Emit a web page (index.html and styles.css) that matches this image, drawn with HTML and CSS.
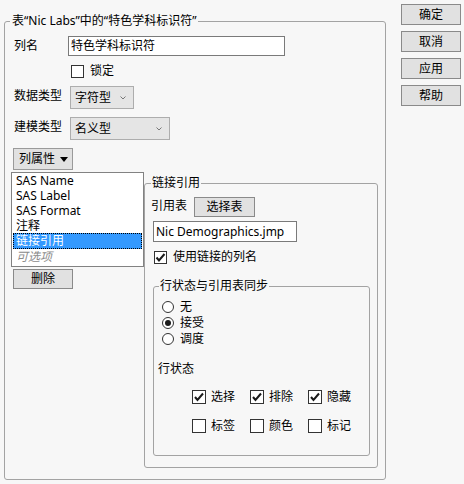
FILE: index.html
```html
<!DOCTYPE html>
<html lang="zh-CN">
<head>
<meta charset="utf-8">
<title>列信息</title>
<link rel="stylesheet" href="styles.css">
</head>
<body>
<div class="dialog">
  <fieldset class="outer">
    <legend class="outer-title">表“Nic Labs”中的“特色学科标识符”</legend>
    <div class="row r-name"><span class="lbl">列名</span><div class="textbox name-box">特色学科标识符</div></div>
    <div class="row r-lock"><span class="cb"></span><span class="cb-label">锁定</span></div>
    <div class="row r-type"><span class="lbl lbl-top">数据类型</span>
      <div class="combo combo-short"><span class="ctext">字符型</span><svg class="chev" width="6" height="4" viewBox="0 0 6 4"><polyline points="0.5,0.5 3,3 5.5,0.5" fill="none" stroke="#777" stroke-width="1"/></svg></div>
    </div>
    <div class="row r-model"><span class="lbl lbl-top">建模类型</span>
      <div class="combo combo-long"><span class="ctext">名义型</span><svg class="chev" width="6" height="4" viewBox="0 0 6 4"><polyline points="0.5,0.5 3,3 5.5,0.5" fill="none" stroke="#777" stroke-width="1"/></svg></div>
    </div>
    <div class="menubtn"><span class="ctext">列属性</span><svg width="8" height="5" viewBox="0 0 8 5"><polygon points="0,0 8,0 4,5" fill="#000"/></svg></div>
    <div class="split">
      <div class="leftcol">
        <ul class="list">
          <li>SAS Name</li>
          <li>SAS Label</li>
          <li>SAS Format</li>
          <li>注释</li>
          <li class="sel">链接引用</li>
          <li class="opt">可选项</li>
        </ul>
        <div class="btn del">删除</div>
      </div>
      <fieldset class="link">
        <legend class="link-title">链接引用</legend>
        <div class="ref-row"><span class="ref-lbl">引用表</span><div class="btn pick">选择表</div></div>
        <div class="textbox file-box">Nic Demographics.jmp</div>
        <div class="use-row"><span class="cb checked"><svg width="13" height="13" viewBox="0 0 13 13"><path d="M2.5 6.5 L5 9.5 L10.5 3" fill="none" stroke="#1a1a1a" stroke-width="2"/></svg></span><span class="cb-label">使用链接的列名</span></div>
        <fieldset class="sync">
          <legend class="sync-title">行状态与引用表同步</legend>
          <div class="radios">
            <div class="radio-row"><span class="radio"></span><span class="rtext">无</span></div>
            <div class="radio-row"><span class="radio on"></span><span class="rtext">接受</span></div>
            <div class="radio-row"><span class="radio"></span><span class="rtext">调度</span></div>
          </div>
          <div class="rs-label">行状态</div>
          <div class="checks">
            <div class="ck"><span class="cb big checked"><svg width="14" height="14" viewBox="0 0 14 14"><path d="M3 7 L5.5 10 L11 3.5" fill="none" stroke="#1a1a1a" stroke-width="2"/></svg></span><span class="rtext">选择</span></div>
            <div class="ck"><span class="cb big checked"><svg width="14" height="14" viewBox="0 0 14 14"><path d="M3 7 L5.5 10 L11 3.5" fill="none" stroke="#1a1a1a" stroke-width="2"/></svg></span><span class="rtext">排除</span></div>
            <div class="ck"><span class="cb big checked"><svg width="14" height="14" viewBox="0 0 14 14"><path d="M3 7 L5.5 10 L11 3.5" fill="none" stroke="#1a1a1a" stroke-width="2"/></svg></span><span class="rtext">隐藏</span></div>
            <div class="ck"><span class="cb big"></span><span class="rtext">标签</span></div>
            <div class="ck"><span class="cb big"></span><span class="rtext">颜色</span></div>
            <div class="ck"><span class="cb big"></span><span class="rtext">标记</span></div>
          </div>
        </fieldset>
      </fieldset>
    </div>
  </fieldset>
  <div class="actions">
    <div class="btn act">确定</div>
    <div class="btn act">取消</div>
    <div class="btn act">应用</div>
    <div class="btn act">帮助</div>
  </div>
</div>
</body>
</html>
```

FILE: styles.css
```css
html, body {
  margin: 0;
  padding: 0;
}
body {
  width: 464px;
  height: 484px;
  overflow: hidden;
  background: #f7f7f7;
  color: #000;
  font-family: "Noto Sans", "Noto Sans CJK SC", sans-serif;
  font-size: 12px;
  line-height: 16px;
}
.dialog {
  display: flex;
  align-items: flex-start;
}
fieldset {
  margin: 0;
  border: 1px solid #a3a3a3;
  border-radius: 3px;
  box-sizing: border-box;
  min-width: 0;
}
legend {
  line-height: 16px;
  height: 16px;
  white-space: nowrap;
}
.outer {
  width: 382px;
  height: 467px;
  margin: 13px 0 0 4px;
  padding: 0;
}
.outer-title {
  margin-left: 5px;
  padding: 0 2px;
}
.row {
  display: flex;
  align-items: center;
  margin-left: 9px;
}
.lbl {
  width: 54px;
  height: 16px;
  flex: none;
}
.lbl-top {
  align-self: flex-start;
  margin-top: 2px;
}
.ctext, .rtext, .cb-label, .ref-lbl {
  display: block;
  height: 16px;
  white-space: nowrap;
}
.textbox {
  box-sizing: border-box;
  background: #fff;
  border: 1px solid #7a7a7a;
  padding: 0 2px;
  line-height: 18px;
  white-space: nowrap;
  overflow: hidden;
}
.name-box {
  width: 217px;
  height: 20px;
}
.r-name {
  margin-top: 7px;
  height: 20px;
}
.r-lock {
  margin-top: 8px;
  padding-left: 57px;
  height: 14px;
}
.cb {
  display: inline-flex;
  width: 13px;
  height: 13px;
  box-sizing: border-box;
  border: 1px solid #333;
  background: #fff;
  flex: none;
  position: relative;
}
.cb svg {
  position: absolute;
  left: -1px;
  top: -1px;
}
.cb.big {
  width: 14px;
  height: 14px;
}
.cb-label {
  margin-left: 6px;
}
.r-type {
  margin-top: 8px;
  align-items: flex-start;
  height: 23px;
}
.r-model {
  margin-top: 8px;
  align-items: flex-start;
  height: 23px;
}
.combo {
  box-sizing: border-box;
  height: 23px;
  margin-left: 2px;
  border: 1px solid #adadad;
  background: #e5e5e5;
  display: flex;
  align-items: center;
  justify-content: space-between;
  padding: 0 7px 0 4px;
}
.combo-short {
  width: 64px;
}
.combo-long {
  width: 100px;
}
.menubtn {
  box-sizing: border-box;
  width: 60px;
  height: 22px;
  margin: 8px 0 0 8px;
  border: 1px solid #9a9a9a;
  background: #e1e1e1;
  display: flex;
  align-items: center;
  gap: 5px;
  padding-left: 5px;
}
.split {
  display: flex;
  align-items: flex-start;
  margin-top: 2px;
}
.leftcol {
  margin-left: 6px;
  width: 133px;
  flex: none;
}
.list {
  list-style: none;
  margin: 0;
  box-sizing: border-box;
  width: 133px;
  height: 95px;
  border: 1px solid #828282;
  background: #fff;
  padding: 0 1px;
}
.list li {
  line-height: 15px;
  height: 15px;
  padding-left: 3px;
  white-space: nowrap;
}
.list li.sel {
  line-height: 16px;
  height: 16px;
  background: #3399ff;
  color: #fff;
  outline: 1px dotted #000;
  outline-offset: -1px;
}
.list li.opt {
  color: #8c8c8c;
  font-style: italic;
}
.btn {
  box-sizing: border-box;
  background: #e1e1e1;
  border: 1px solid #8a8a8a;
  display: flex;
  align-items: center;
  justify-content: center;
  line-height: 16px;
}
.del {
  width: 60px;
  height: 20px;
  margin: 2px 0 0 2px;
}
.link {
  width: 234px;
  margin-top: 3px;
  padding: 0 0 11px 0;
}
.link-title {
  margin-left: 6px;
  padding: 0 1px;
}
.ref-row {
  display: flex;
  align-items: flex-start;
  margin: 6px 0 0 6px;
  height: 20px;
}
.ref-lbl {
  margin-top: 1px;
}
.pick {
  width: 61px;
  height: 20px;
  margin-left: 7px;
}
.file-box {
  width: 144px;
  height: 21px;
  margin: 4px 0 0 8px;
  line-height: 19px;
}
.use-row {
  display: flex;
  align-items: center;
  margin: 8px 0 0 9px;
  height: 14px;
}
.sync {
  width: 217px;
  margin: 14px 0 0 8px;
  padding: 0 0 21px 0;
}
.sync-title {
  margin-left: 5px;
  padding: 0 1px;
}
.radios {
  margin: 5px 0 0 8px;
}
.radio-row {
  display: flex;
  align-items: center;
  height: 16px;
}
.radio {
  width: 12px;
  height: 12px;
  box-sizing: border-box;
  border: 1px solid #333;
  border-radius: 50%;
  background: #fff;
  margin-right: 6px;
  display: flex;
  align-items: center;
  justify-content: center;
}
.radio.on::after {
  content: "";
  width: 6px;
  height: 6px;
  border-radius: 50%;
  background: #1a1a1a;
}
.rs-label {
  margin: 14px 0 0 4px;
  height: 16px;
}
.checks {
  display: grid;
  grid-template-columns: repeat(3, 58px);
  grid-auto-rows: 16px;
  row-gap: 13px;
  margin: 12px 0 0 38px;
}
.ck {
  display: flex;
  align-items: center;
  height: 16px;
}
.ck .cb {
  margin-right: 5px;
}
.actions {
  display: flex;
  flex-direction: column;
  gap: 6px;
  margin: 4px 0 0 15px;
}
.act {
  width: 60px;
  height: 21px;
}
```
